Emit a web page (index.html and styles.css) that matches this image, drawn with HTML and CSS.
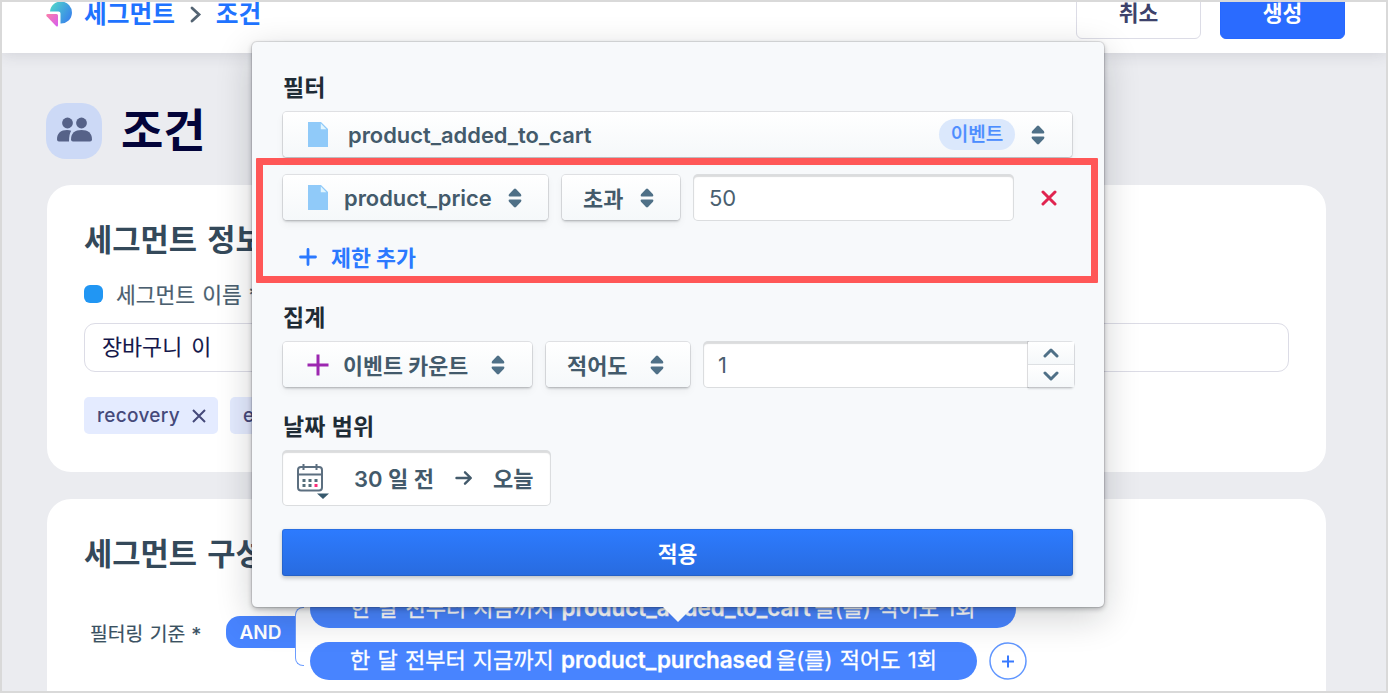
FILE: index.html
```html
<!DOCTYPE html>
<html lang="ko">

<head>
    <meta charset="utf-8" />
    <title>세그먼트 조건</title>
    <link rel="stylesheet" href="styles.css">
</head>

<body>
    <svg class="sprite" width="0" height="0">
        <symbol id="caret" viewBox="0 0 14 20">
            <path d="M6 .9Q7 0 8 .9L13 6.2Q14 8.4 12.4 8.4H1.6Q0 8.4 1 6.2zM6 19.1Q7 20 8 19.1L13 13.8Q14 11.4 12.4 11.4H1.6Q0 11.4 1 13.8z" />
        </symbol>
        <symbol id="doc" viewBox="0 0 20 25">
            <path fill="#90caf9" d="M0 0H13L20 7V25H0z" />
            <path fill="#e1f5fe" d="M12.8 1.6V7.2H18.4z" />
        </symbol>
    </svg>

    <div class="app">
        <header>
            <nav>
                <svg class="logo" width="26" height="26" viewBox="0 0 26 26">
                    <defs>
                        <linearGradient id="g1" x1="0" y1="0" x2="1" y2="0.6">
                            <stop offset="0" stop-color="#52dcc8" />
                            <stop offset="1" stop-color="#3a86ea" />
                        </linearGradient>
                        <linearGradient id="g2" x1="0" y1="0" x2="1" y2="1">
                            <stop offset="0" stop-color="#fb7fa8" />
                            <stop offset="1" stop-color="#d65cf0" />
                        </linearGradient>
                    </defs>
                    <path fill="url(#g1)" d="M4 10.5A11 11 0 1 1 14.5 22.5V12.5Q14.5 10.5 12.5 10.5z" />
                    <path fill="url(#g2)" d="M1.5 13H10.5Q12 13 12 14.5V24Q12 26.5 10 25L.7 15.3Q-.6 13.4 1.5 13z" />
                </svg>
                <a class="crumb">세그먼트</a>
                <svg class="sep" width="12" height="17" viewBox="0 0 12 17"><path d="M2 2l7 6.5L2 15" /></svg>
                <a class="crumb">조건</a>
            </nav>
            <div class="actions">
                <button class="btn">취소</button>
                <button class="btn primary">생성</button>
            </div>
        </header>

        <main>
            <div class="title">
                <div class="title-icon">
                    <svg width="36" height="28" viewBox="0 0 36 28">
                        <circle cx="11.5" cy="7" r="5.4" />
                        <circle cx="25.5" cy="7" r="5.4" />
                        <path d="M1 23.5C1 17 5 14 11 14q2.5 0 4.2.7Q13 18 13 25.5H3Q1 25.5 1 23.5z" />
                        <path d="M15 23.5C15 17 19 14 25.5 14S36 17 36 23.5Q36 25.5 34 25.5H17Q15 25.5 15 23.5z" />
                    </svg>
                </div>
                <h1>조건</h1>
            </div>

            <section class="card">
                <h2>세그먼트 정보</h2>
                <div class="field-label"><span class="dot"></span>세그먼트 이름 *</div>
                <div class="name-input">장바구니 이</div>
                <div class="tags">
                    <span class="tag">recovery <svg width="14" height="14" viewBox="0 0 14 14"><path d="M1 1l12 12M13 1L1 13" /></svg></span>
                    <span class="tag">e</span>
                </div>
            </section>

            <section class="card">
                <h2>세그먼트 구성</h2>
                <div class="rules">
                    <span class="rules-label">필터링 기준 *</span>
                    <span class="and">AND</span>
                    <span class="bracket"></span>
                    <div class="pills">
                        <div class="pill first">한 달 전부터 지금까지 <b>product_added_to_cart</b>을(를) 적어도 1회</div>
                        <div class="pill-row">
                            <div class="pill">한 달 전부터 지금까지 <b>product_purchased</b>을(를) 적어도 1회</div>
                            <svg width="38" height="38" viewBox="0 0 38 38"><circle cx="19" cy="19" r="18" /><path d="M13 19.5h12M19 13.5v12" /></svg>
                        </div>
                    </div>
                </div>
            </section>
        </main>

        <div class="popover">
            <h3>필터</h3>
            <div class="row">
                <div class="select event">
                    <svg class="doc"><use href="#doc" /></svg>
                    <span class="grow">product_added_to_cart</span>
                    <span class="badge">이벤트</span>
                    <svg class="caret"><use href="#caret" /></svg>
                </div>
            </div>
            <div class="row limit">
                <div class="select prop">
                    <svg class="doc"><use href="#doc" /></svg>
                    <span class="grow">product_price</span>
                    <svg class="caret"><use href="#caret" /></svg>
                </div>
                <div class="select op">
                    <span class="grow">초과</span>
                    <svg class="caret"><use href="#caret" /></svg>
                </div>
                <div class="input value">50</div>
                <svg class="remove" width="16" height="16" viewBox="0 0 16 16"><path d="M2 2l12 12M14 2L2 14" /></svg>
            </div>
            <div class="add">
                <svg width="18" height="18" viewBox="0 0 18 18"><path d="M1.5 9h15M9 1.5v15" /></svg>
                <span>제한 추가</span>
            </div>

            <h3 class="agg">집계</h3>
            <div class="row">
                <div class="select count">
                    <svg class="plus" width="22" height="22" viewBox="0 0 22 22"><path d="M.5 11h21M11 .5v21" /></svg>
                    <span class="grow">이벤트 카운트</span>
                    <svg class="caret"><use href="#caret" /></svg>
                </div>
                <div class="select least">
                    <span class="grow">적어도</span>
                    <svg class="caret"><use href="#caret" /></svg>
                </div>
                <div class="input num">1</div>
                <div class="stepper">
                    <span><svg width="16" height="10" viewBox="0 0 16 10"><path d="M2 8l6-6 6 6" /></svg></span>
                    <span><svg width="16" height="10" viewBox="0 0 16 10"><path d="M2 2l6 6 6-6" /></svg></span>
                </div>
            </div>

            <h3 class="range">날짜 범위</h3>
            <div class="input date">
                <svg class="calendar" width="34" height="38" viewBox="0 0 34 38">
                    <g fill="none" stroke="#5c6f80" stroke-width="2">
                        <rect x="2" y="4" width="24" height="23.5" rx="3" />
                        <path d="M2 11.5h24M7.5 1v6M20.5 1v6" />
                    </g>
                    <g fill="#546e7a">
                        <path d="M6.5 16h3v3h-3zM12.5 16h3v3h-3zM18.5 16h3v3h-3zM6.5 21h3v3h-3zM12.5 21h3v3h-3z" />
                        <path fill="#ff2d78" d="M18.5 21h3v3h-3z" />
                        <path fill="#37596d" d="M21 30.5h12l-6 5.5z" />
                    </g>
                </svg>
                <span class="from">30 일 전</span>
                <svg class="arrow" width="18" height="16" viewBox="0 0 18 16"><path d="M1.5 8h14M10 2.3L15.8 8 10 13.7" /></svg>
                <span class="to">오늘</span>
            </div>
            <button class="apply">적용</button>
            <div class="highlight"></div>
        </div>
    </div>
</body>

</html>
```
FILE: styles.css
```css
* {
    box-sizing: border-box;
}

body {
    margin: 0;
    font-family: Inter, "Noto Sans CJK KR", sans-serif;
    color: #3a5162;
}

h1, h2, h3 {
    margin: 0;
    font-weight: bold;
}

button {
    font-family: inherit;
    font-weight: bold;
    padding: 0;
}

svg {
    flex: none;
}

.sprite {
    position: absolute;
}

.app {
    position: relative;
    width: 1388px;
    height: 693px;
    border: 2px solid #d9d9d9;
    background: #ebecf0;
    overflow: hidden;
}

/* header is scrolled partly out of view */
header {
    display: flex;
    justify-content: space-between;
    align-items: center;
    height: 78px;
    margin-top: -27px;
    padding: 0 41px 0 44px;
    background: #fff;
    box-shadow: 0 1px 14px rgba(60, 64, 80, 0.16);
}

nav {
    display: flex;
    align-items: center;
}

.crumb {
    color: #1f73ff;
    font-size: 24.7px;
    font-weight: bold;
    line-height: 30px;
}

.logo {
    margin-right: 12px;
}

.sep {
    margin: 1px 14px 0 15px;
    fill: none;
    stroke: #546473;
    stroke-width: 2.8;
    stroke-linecap: round;
}

.actions {
    display: flex;
    gap: 19px;
}

.btn {
    width: 125px;
    height: 50px;
    padding-bottom: 5px;
    border: 1px solid #dcdce6;
    border-radius: 6px;
    background: #fff;
    color: #3d426b;
    font-size: 21.5px;
}

.btn.primary {
    border-color: #2667ff;
    background: #2a6bff;
    color: #fff;
}

main {
    padding: 50px 60px 0 45px;
}

.title {
    display: flex;
    align-items: center;
    gap: 19px;
    height: 56px;
    margin: 0 0 26px -1px;
}

.title-icon {
    display: flex;
    align-items: center;
    justify-content: center;
    width: 56px;
    height: 56px;
    border-radius: 20px;
    background: #ccd9f6;
}

.title-icon svg {
    margin: 0 1px 2px 0;
    fill: #566288;
}

h1 {
    color: #03043a;
    font-size: 46px;
    line-height: 54px;
    margin-bottom: 2px;
}

.card {
    height: 287px;
    margin-bottom: 27px;
    padding: 37px;
    border-radius: 24px;
    background: #fff;
}

h2 {
    font-size: 30.7px;
    line-height: 36px;
    word-spacing: 3px;
    color: #34495a;
    white-space: nowrap;
}

.field-label {
    display: flex;
    align-items: center;
    height: 26px;
    margin-top: 22px;
    color: #4b5f70;
    font-size: 21.5px;
    word-spacing: 1px;
    -webkit-text-stroke: 0.2px;
}

.dot {
    width: 19px;
    height: 18px;
    margin: 2px 13px 0 0;
    border-radius: 6px;
    background: #2196f3;
}

.name-input {
    height: 49px;
    margin: 17px 0 25px;
    padding: 0 17px;
    border: 1px solid #dcdce6;
    border-radius: 11px;
    color: #14174a;
    font-size: 21.8px;
    line-height: 46px;
    word-spacing: 3px;
    -webkit-text-stroke: 0.1px;
}

.tags {
    display: flex;
    gap: 12px;
}

.tag {
    display: flex;
    align-items: center;
    gap: 12px;
    height: 37px;
    padding: 0 12px 0 13px;
    border-radius: 5px;
    background: #e4ebff;
    color: #45497a;
    font-size: 19px;
    font-weight: 500;
    letter-spacing: 0.3px;
}

.tag svg {
    fill: none;
    stroke: #45497a;
    stroke-width: 2;
}

.rules {
    display: flex;
    align-items: flex-start;
    margin-top: 18px;
}

.rules-label {
    width: 136px;
    margin: 29px 0 0 6px;
    font-size: 19.3px;
    line-height: 30px;
    word-spacing: 1px;
    -webkit-text-stroke: 0.2px;
}

.and {
    width: 69px;
    height: 32px;
    margin-top: 26px;
    border-radius: 14px 0 0 14px;
    background: #4884ff;
    color: #fff;
    font-size: 19px;
    font-weight: 600;
    line-height: 33px;
    text-align: center;
}

.bracket {
    width: 9px;
    height: 59px;
    margin-top: 17px;
    border: 1.5px solid #6c9dff;
    border-right: 0;
    border-radius: 8px 0 0 8px;
}

.pills {
    display: flex;
    flex-direction: column;
    align-items: flex-start;
    gap: 14px;
    margin-left: 6px;
}

.pill-row {
    display: flex;
    gap: 12px;
}

.pill-row svg {
    fill: #fff;
    stroke: #6197ff;
    stroke-width: 1.5;
}

.pill-row path {
    stroke: #397aff;
    stroke-width: 2;
}

.pill {
    width: 667px;
    height: 38px;
    border-radius: 19px;
    background: #4884ff;
    color: #fff;
    font-size: 22px;
    line-height: 36px;
    text-align: center;
    white-space: nowrap;
    word-spacing: 1px;
    -webkit-text-stroke: 0.3px;
}

.pill.first {
    width: 706px;
}

.pill b {
    margin-right: 4px;
    font-size: 22.4px;
    font-weight: 600;
}

.popover {
    position: absolute;
    left: 250px;
    top: 40px;
    width: 852px;
    height: 565px;
    padding: 33px 30px 0 31px;
    border-radius: 5px;
    background: #f7f9fb;
    box-shadow: 0 0 0 1px rgba(16, 22, 26, 0.1), 0 2px 5px rgba(16, 22, 26, 0.3), 0 10px 36px rgba(16, 22, 26, 0.2);
}

.popover::after {
    content: "";
    position: absolute;
    left: 410px;
    top: 564px;
    border: 16px solid transparent;
    border-top-color: #f7f9fb;
    border-bottom: 0;
}

h3 {
    height: 26px;
    margin-bottom: 10px;
    color: #1f2c36;
    font-size: 23px;
    line-height: 26px;
}

h3.agg {
    margin-top: 34px;
}

h3.range {
    margin: 26px 0 10px;
    word-spacing: 1px;
}

.row {
    display: flex;
    align-items: center;
    height: 47px;
}

.row.limit {
    margin-top: 16px;
}

.select {
    display: flex;
    align-items: center;
    height: 45px;
    border-radius: 4px;
    background: linear-gradient(#fff, #f5f8fa);
    box-shadow: 0 0 0 1px rgba(16, 22, 26, 0.1), 0 2px 2px rgba(16, 22, 26, 0.14), 0 4px 8px rgba(16, 22, 26, 0.05);
    color: #435a6b;
    font-size: 21.9px;
    font-weight: 600;
}

.grow {
    flex: 1;
    white-space: nowrap;
}

.doc {
    width: 20px;
    height: 25px;
    margin: 0 20px 0 25px;
}

.caret {
    width: 14px;
    height: 20px;
    fill: #4f7087;
}

.badge {
    width: 76px;
    height: 31px;
    margin-right: 16px;
    border-radius: 16px;
    background: #dbe8fc;
    color: #4c8dff;
    font-size: 19px;
    font-weight: 500;
    line-height: 31px;
    text-align: center;
    -webkit-text-stroke: 0.2px;
}

.event {
    width: 789px;
    padding-right: 27px;
}

.prop {
    width: 265px;
    margin-right: 14px;
    padding-right: 26px;
}

.prop .doc {
    margin-right: 16px;
}

.op {
    width: 118px;
    margin-right: 14px;
    padding: 0 26px 0 21px;
}

.input {
    height: 45px;
    border-radius: 4px;
    background: #fff;
    box-shadow: 0 0 0 1px rgba(16, 22, 26, 0.12), inset 0 2px 1px rgba(16, 22, 26, 0.15);
    color: #4a6070;
    font-size: 22px;
    line-height: 46px;
}

.value {
    width: 319px;
    padding-left: 15px;
}

.remove {
    margin-left: 28px;
    fill: none;
    stroke: #e0244f;
    stroke-width: 3;
    stroke-linecap: round;
}

.add {
    display: flex;
    align-items: center;
    gap: 14px;
    height: 26px;
    margin-top: 23px;
    margin-bottom: 35px;
    padding-left: 16px;
    color: #2b79ff;
    font-size: 21.7px;
    font-weight: bold;
}

.add span {
    padding-bottom: 2px;
}

.add svg {
    stroke: #2b79ff;
    stroke-width: 2.8;
    stroke-linecap: round;
}

.count {
    width: 249px;
    margin-right: 14px;
    padding: 0 27px 0 24px;
    font-size: 21.7px;
}

.plus {
    margin-right: 14px;
    stroke: #9c27b0;
    stroke-width: 3;
}

.least {
    width: 144px;
    margin-right: 14px;
    padding: 0 26px 0 21px;
}

.num {
    width: 324px;
    padding-left: 14px;
    border-radius: 4px 0 0 4px;
}

.stepper {
    width: 46px;
    height: 45px;
    border-radius: 0 4px 4px 0;
    box-shadow: 0 0 0 1px rgba(16, 22, 26, 0.1), 0 2px 2px rgba(16, 22, 26, 0.14);
}

.stepper span {
    display: flex;
    align-items: center;
    justify-content: center;
    height: 22px;
    background: linear-gradient(#fff, #f5f8fa);
}

.stepper span + span {
    height: 23px;
    border-top: 1px solid #dde0e3;
}

.stepper svg {
    fill: none;
    stroke: #4f7087;
    stroke-width: 3;
    stroke-linecap: round;
    stroke-linejoin: round;
}

.date {
    display: flex;
    align-items: center;
    width: 267px;
    height: 54px;
    margin-top: 11px;
    padding-left: 13px;
    color: #435a6b;
    font-weight: 600;
    white-space: nowrap;
}

.calendar {
    margin-top: 7px;
}

.from, .to {
    padding-top: 2px;
}

.from {
    margin-left: 24px;
}

.arrow {
    margin: 0 20px 0 21px;
    fill: none;
    stroke: #435a6b;
    stroke-width: 2.4;
    stroke-linecap: round;
    stroke-linejoin: round;
}

.apply {
    display: block;
    width: 791px;
    height: 47px;
    margin: 24px 0 0 -1px;
    border: 0;
    border-radius: 3px;
    background: linear-gradient(#2d7bff, #286bdf);
    box-shadow: inset 0 0 0 1px rgba(16, 22, 26, 0.12), 0 2px 4px rgba(16, 22, 26, 0.25);
    color: #fff;
    font-size: 21.5px;
}

.highlight {
    position: absolute;
    left: 4px;
    top: 116px;
    width: 842px;
    height: 125px;
    border: 7px solid #ff5757;
    border-radius: 1px;
}
```
